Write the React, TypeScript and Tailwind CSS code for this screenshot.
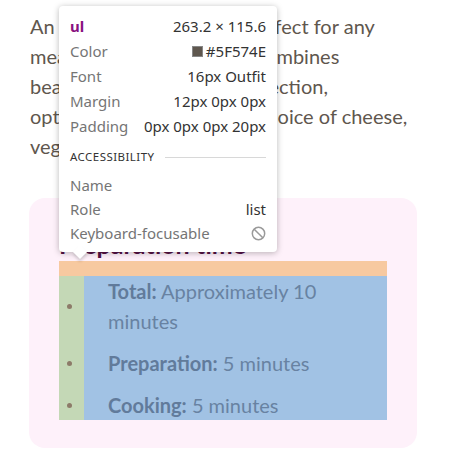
import React from 'react';

const ROWS = [
  { label: 'Color', value: '#5F574E', swatch: true },
  { label: 'Font', value: '16px Outfit' },
  { label: 'Margin', value: '12px 0px 0px' },
  { label: 'Padding', value: '0px 0px 0px 20px' },
];

function NotAllowed() {
  return (
    <svg width="15" height="15" viewBox="0 0 16 16" fill="none" stroke="#9a9a9a" strokeWidth={1.6}>
      <circle cx="8" cy="8" r="6.6" />
      <path d="M3.4 3.4l9.2 9.2" />
    </svg>
  );
}

function Inspector() {
  return (
    <div
      className="absolute left-[59px] top-[6px] w-[218px] bg-white rounded-[4px] shadow-[0_1px_6px_rgba(0,0,0,0.28)] px-[11px] pt-[8px] pb-[7px] text-[15px] text-[#757575]"
      style={{ fontFamily: '"Noto Sans", "Open Sans", sans-serif' }}
    >
      <div className="h-[25px] flex items-center justify-between">
        <span className="font-bold text-[#881280]">ul</span>
        <span className="text-[#333]">263.2 × 115.6</span>
      </div>
      {ROWS.map((r) => (
        <div key={r.label} className="h-[25px] flex items-center justify-between">
          <span>{r.label}</span>
          <span className="flex items-center gap-[3px] text-[#333]">
            {r.swatch && <span className="w-[11px] h-[11px] bg-[#5F574E] border border-[#888]" />}
            {r.value}
          </span>
        </div>
      ))}
      <div className="mt-[8px] h-[20px] flex items-center gap-[10px]">
        <span className="text-[11.5px] tracking-[0.04em] text-[#333]">ACCESSIBILITY</span>
        <span className="flex-1 h-px bg-[#d8d8d8]" />
      </div>
      <div className="mt-[6px] h-[24px] flex items-center">Name</div>
      <div className="h-[24px] flex items-center justify-between">
        <span>Role</span>
        <span className="text-[#333]">list</span>
      </div>
      <div className="h-[24px] flex items-center justify-between">
        <span>Keyboard-focusable</span>
        <NotAllowed />
      </div>
      {/* pointer */}
      <div className="absolute left-[16px] bottom-[-5px] w-[10px] h-[10px] bg-white rotate-45 shadow-[2px_2px_3px_rgba(0,0,0,0.15)]" />
    </div>
  );
}

export default function App() {
  return (
    <div className="relative w-[450px] h-[450px] overflow-hidden bg-white" style={{ fontFamily: 'Lato, "Noto Sans", sans-serif' }}>
      <div className="ml-[29px] w-[388px] pt-[11px]">
        <p className="text-[20px] leading-[30px] text-[#5F574E] pl-px">
          An easy omelette that is perfect for any
          <br />
          meal of the day. This dish combines
          <br />
          beaten eggs cooked to perfection,
          <br />
          optionally filled with your choice of cheese,
          <br />
          vegetables, or meats.
        </p>

        <div className="mt-[37px] bg-[#fef1fa] rounded-[16px] px-[30px] pt-[30px] pb-[28px]">
          <h2 className="text-[25px] leading-[33px] font-bold text-[#551245]">Preparation time</h2>
          {/* devtools box-model overlay of the ul */}
          <div className="bg-[#f7c9a0] pt-[15px]">
            <div className="bg-[#c4d8b6] pl-[25px]">
              <ul className="bg-[#a1c2e4] flex flex-col gap-[12px] text-[20px] leading-[30px] text-[#6882a2]">
                <li className="flex items-center pl-[24px]">
                  <span className="ml-[-41px] mr-[36px] w-[5px] h-[5px] shrink-0 rounded-full bg-[#8d7b69]" />
                  <span>
                    <b className="font-bold text-[#617b9b]">Total:</b> Approximately 10
                    <br />
                    minutes
                  </span>
                </li>
                <li className="flex items-center pl-[24px]">
                  <span className="ml-[-41px] mr-[36px] w-[5px] h-[5px] shrink-0 rounded-full bg-[#8d7b69]" />
                  <span>
                    <b className="font-bold text-[#617b9b]">Preparation:</b> 5 minutes
                  </span>
                </li>
                <li className="flex items-center pl-[24px]">
                  <span className="ml-[-41px] mr-[36px] w-[5px] h-[5px] shrink-0 rounded-full bg-[#8d7b69]" />
                  <span>
                    <b className="font-bold text-[#617b9b]">Cooking:</b> 5 minutes
                  </span>
                </li>
              </ul>
            </div>
          </div>
        </div>
      </div>
      <Inspector />
    </div>
  );
}
